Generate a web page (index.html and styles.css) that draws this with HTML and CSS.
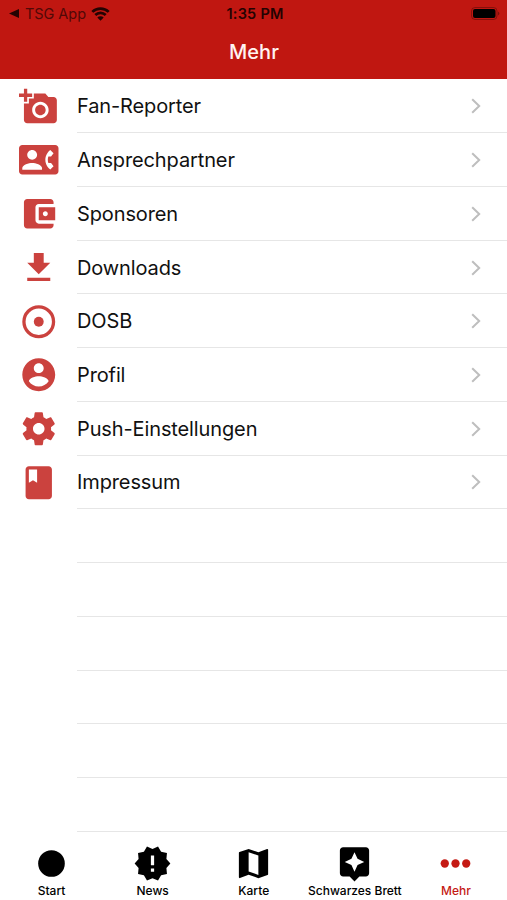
FILE: index.html
```html
<!DOCTYPE html>
<html lang="de">
<head>
<meta charset="utf-8">
<title>Mehr</title>
<link rel="stylesheet" href="styles.css">
</head>
<body>
<div class="app">
  <header class="header">
    <div class="status">
      <div class="status-left">
        <svg class="back" viewBox="0 0 10 9"><path d="M10 0v9L0 4.5z"/></svg>
        <span class="back-app">TSG App</span>
        <svg class="wifi" viewBox="0 0 19 14"><path d="M1.300 4.900a11.700 11.700 0 0 1 16.400 0M4.300 8a7.400 7.400 0 0 1 10.400 0" fill="none" stroke="currentColor" stroke-width="2.700"/><path d="M9.500 13.700 6.300 10.500a4.500 4.500 0 0 1 6.400 0z"/></svg>
      </div>
      <span class="time">1:35 PM</span>
      <svg class="battery" viewBox="0 0 30 13"><rect x=".5" y=".5" width="25.500" height="12" rx="3.500" fill="none" stroke="currentColor" opacity=".3"/><rect x="2" y="2" width="22.500" height="9" rx="2"/><path d="M27.300 4.500q2 2 0 4z" opacity=".5"/></svg>
    </div>
    <h1 class="title">Mehr</h1>
  </header>
  <main class="list">
    <div class="row"><svg class="icon" viewBox="0 0 24 24"><path d="M3 4V1h2v3h3v2H5v3H3V6H0V4h3zm3 6V7h3V4h7l1.830 2H21c1.100 0 2 .9 2 2v12c0 1.100-.9 2-2 2H5c-1.100 0-2-.9-2-2V10h3zm7 9c2.760 0 5-2.240 5-5s-2.240-5-5-5-5 2.240-5 5 2.240 5 5 5zm-3.200-5c0 1.770 1.430 3.200 3.200 3.200s3.200-1.430 3.200-3.200-1.430-3.200-3.200-3.200-3.200 1.430-3.200 3.200z"/></svg><div class="cell"><span>Fan-Reporter</span><svg class="chevron" viewBox="0 0 10 16"><path d="m1.200 1.200 7 6.800-7 6.800"/></svg></div></div>
    <div class="row"><svg class="icon" viewBox="0 0 24 24"><path d="M22 3H2C.9 3 0 3.900 0 5v14c0 1.100.9 2 2 2h20c1.100 0 1.990-.9 1.990-2L24 5c0-1.100-.9-2-2-2zM8 6c1.660 0 3 1.340 3 3s-1.340 3-3 3-3-1.340-3-3 1.340-3 3-3zm6 12H2v-1c0-2 4-3.100 6-3.100s6 1.100 6 3.100v1zm3.850-4h1.640L21 16l-1.990 1.990c-1.310-.98-2.280-2.380-2.730-3.990-.18-.64-.28-1.310-.28-2s.1-1.360.28-2c.45-1.620 1.420-3.010 2.730-3.990L21 8l-1.510 2h-1.640c-.22.630-.35 1.300-.35 2s.13 1.370.35 2z"/></svg><div class="cell"><span>Ansprechpartner</span><svg class="chevron" viewBox="0 0 10 16"><path d="m1.200 1.200 7 6.800-7 6.800"/></svg></div></div>
    <div class="row"><svg class="icon" viewBox="0 0 24 24"><path d="M21 18v1c0 1.100-.9 2-2 2H5c-1.110 0-2-.9-2-2V5c0-1.100.89-2 2-2h14c1.100 0 2 .9 2 2v1h-9c-1.110 0-2 .9-2 2v8c0 1.100.89 2 2 2h9zm-9-2h10V8H12v8zm4-2.500c-.83 0-1.500-.67-1.500-1.500s.67-1.500 1.500-1.500 1.500.67 1.500 1.500-.67 1.500-1.500 1.500z"/></svg><div class="cell"><span>Sponsoren</span><svg class="chevron" viewBox="0 0 10 16"><path d="m1.200 1.200 7 6.800-7 6.800"/></svg></div></div>
    <div class="row"><svg class="icon" viewBox="0 0 24 24"><path d="M19 9h-4V3H9v6H5l7 7 7-7zM5 18v2h14v-2H5z"/></svg><div class="cell"><span>Downloads</span><svg class="chevron" viewBox="0 0 10 16"><path d="m1.200 1.200 7 6.800-7 6.800"/></svg></div></div>
    <div class="row"><svg class="icon" viewBox="0 0 24 24"><circle cx="12" cy="12" r="9" fill="none" stroke="currentColor" stroke-width="2"/><circle cx="12" cy="12" r="3"/></svg><div class="cell"><span>DOSB</span><svg class="chevron" viewBox="0 0 10 16"><path d="m1.200 1.200 7 6.800-7 6.800"/></svg></div></div>
    <div class="row"><svg class="icon" viewBox="0 0 24 24"><path d="M12 2C6.480 2 2 6.480 2 12s4.480 10 10 10 10-4.480 10-10S17.520 2 12 2zm0 3c1.660 0 3 1.340 3 3s-1.340 3-3 3-3-1.340-3-3 1.340-3 3-3zm0 14.200c-2.500 0-4.710-1.280-6-3.220.03-1.990 4-3.080 6-3.080 1.990 0 5.970 1.090 6 3.080-1.290 1.940-3.500 3.220-6 3.220z"/></svg><div class="cell"><span>Profil</span><svg class="chevron" viewBox="0 0 10 16"><path d="m1.200 1.200 7 6.800-7 6.800"/></svg></div></div>
    <div class="row"><svg class="icon" viewBox="0 0 24 24"><path d="M19.430 12.980c.04-.32.070-.64.070-.98s-.03-.66-.07-.98l2.110-1.650c.19-.15.240-.42.120-.64l-2-3.460c-.12-.22-.39-.3-.61-.22l-2.490 1c-.52-.4-1.080-.73-1.690-.98l-.38-2.650C14.460 2.180 14.250 2 14 2h-4c-.25 0-.46.180-.49.420l-.38 2.650c-.61.250-1.170.590-1.690.980l-2.490-1c-.23-.09-.49 0-.61.220l-2 3.460c-.13.220-.07.490.12.640l2.110 1.650c-.04.320-.07.650-.07.980s.03.660.070.980l-2.110 1.650c-.19.150-.24.420-.12.640l2 3.460c.12.220.39.300.61.220l2.490-1c.52.400 1.080.730 1.690.980l.38 2.650c.03.240.24.420.49.420h4c.25 0 .46-.18.490-.42l.38-2.650c.61-.25 1.170-.59 1.690-.98l2.490 1c.23.090.49 0 .61-.22l2-3.460c.12-.22.070-.49-.12-.64l-2.110-1.650zM12 15.500c-1.930 0-3.500-1.570-3.500-3.500s1.570-3.500 3.500-3.500 3.500 1.570 3.500 3.500-1.570 3.500-3.500 3.500z"/></svg><div class="cell"><span>Push-Einstellungen</span><svg class="chevron" viewBox="0 0 10 16"><path d="m1.200 1.200 7 6.800-7 6.800"/></svg></div></div>
    <div class="row"><svg class="icon" viewBox="0 0 24 24"><path fill-rule="evenodd" d="M6 2h12c1.100 0 2 .9 2 2v16c0 1.100-.9 2-2 2H6c-1.100 0-2-.9-2-2V4c0-1.100.9-2 2-2zm0 2v8l2.500-1.500L11 12V4H6z"/></svg><div class="cell"><span>Impressum</span><svg class="chevron" viewBox="0 0 10 16"><path d="m1.200 1.200 7 6.800-7 6.800"/></svg></div></div>
    <div class="row"><div class="cell"></div></div>
    <div class="row"><div class="cell"></div></div>
    <div class="row"><div class="cell"></div></div>
    <div class="row"><div class="cell"></div></div>
    <div class="row"><div class="cell"></div></div>
    <div class="row"><div class="cell"></div></div>
  </main>
  <nav class="tabs">
    <div class="tab"><svg viewBox="0 0 24 24"><circle cx="12" cy="12" r="8.200"/></svg><span>Start</span></div>
    <div class="tab"><svg viewBox="0 0 24 24"><path d="M23 12l-2.440-2.780.34-3.680-3.610-.82-1.890-3.180L12 3 8.600 1.540 6.710 4.720l-3.610.81.340 3.680L1 12l2.440 2.780-.34 3.690 3.610.82 1.890 3.180L12 21l3.400 1.460 1.890-3.180 3.610-.82-.34-3.680L23 12zm-10 5h-2v-2h2v2zm0-4h-2V7h2v6z"/></svg><span>News</span></div>
    <div class="tab"><svg viewBox="0 0 24 24"><path d="M20.500 3l-.16.030L15 5.100 9 3 3.360 4.900c-.21.070-.36.250-.36.480V20.500c0 .28.220.5.500.5l.16-.03L9 18.900l6 2.100 5.640-1.900c.21-.07.360-.25.360-.48V3.500c0-.28-.22-.5-.5-.5zM15 19l-6-2.110V5l6 2.110V19z"/></svg><span>Karte</span></div>
    <div class="tab"><svg viewBox="0 0 24 24"><path d="M19 2H5c-1.110 0-2 .9-2 2v14c0 1.100.89 2 2 2h4l3 3 3-3h4c1.100 0 2-.9 2-2V4c0-1.100-.9-2-2-2zm-5.120 10.880L12 17l-1.880-4.120L6 11l4.120-1.880L12 5l1.880 4.120L18 11l-4.120 1.880z"/></svg><span>Schwarzes Brett</span></div>
    <div class="tab active"><svg viewBox="0 0 24 24"><circle cx="5.400" cy="12" r="2.550"/><circle cx="12" cy="12" r="2.550"/><circle cx="18.600" cy="12" r="2.550"/></svg><span>Mehr</span></div>
  </nav>
</div>
</body>
</html>
```
FILE: styles.css
```css
* { box-sizing: border-box; }
body {
  margin: 0;
  background: #fff;
  color: #111;
  font-family: Inter, "Liberation Sans", sans-serif;
}
svg { display: block; flex: none; fill: currentColor; }
.app { display: flex; flex-direction: column; width: 507px; height: 900px; overflow: hidden; }
.header { height: 79px; flex: none; background: #c01711; }
.status {
  display: grid;
  grid-template-columns: 1fr auto 1fr;
  align-items: center;
  height: 27px;
  padding: 0 6px 0 9px;
  color: #240302;
}
.status-left { display: flex; align-items: center; }
.back { width: 10px; height: 9px; }
.back-app { margin-left: 6px; font-size: 14.5px; letter-spacing: -0.05px; color: #510907; }
.wifi { width: 19px; height: 14px; margin-left: 5px; }
.time { font-size: 14.5px; font-weight: 600; letter-spacing: 0.25px; }
.battery { width: 30px; height: 13px; justify-self: end; color: #000; }
.title {
  margin: 0;
  height: 51px;
  padding-left: 1px;
  line-height: 51px;
  text-align: center;
  font-size: 20px;
  font-weight: 550;
  color: #fff3f1;
}
.list { flex: none; padding-top: 0.6px; }
.row { display: flex; align-items: center; justify-content: flex-end; height: 53.73px; }
.icon { width: 39.5px; height: 39.5px; margin-right: 18.5px; color: #cb423e; }
.cell {
  display: flex;
  align-items: center;
  justify-content: space-between;
  width: 430px;
  height: 100%;
  padding: 1px 26px 0 0;
  border-bottom: 1px solid #e6e6e6;
  font-size: 20px;
  letter-spacing: -0.12px;
}
.chevron { width: 10px; height: 16px; fill: none; stroke: #bebebe; stroke-width: 2; }
.tabs { display: grid; grid-template-columns: repeat(5, 101.1px); flex: 1; padding: 12.2px 0 0 1px; }
.tab { display: flex; flex-direction: column; align-items: center; color: #000; font-size: 12px; font-weight: 500; }
.tab svg { width: 39px; height: 39px; }
.tab span { line-height: 16px; white-space: nowrap; }
.active { color: #c51a14; }
```
